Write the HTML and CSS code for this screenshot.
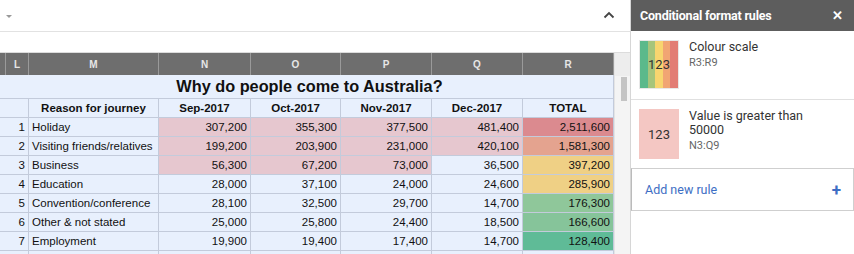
FILE: index.html
```html
<!DOCTYPE html>
<html lang="en">
<head>
  <meta charset="UTF-8" />
  <title>Conditional format rules</title>
  <link rel="stylesheet" href="styles.css">
</head>
<body>
  <div class="app">

    <!-- SHEET -->
    <div class="sheet">
      <div class="toolbar">
        <span class="drop"></span>
        <svg class="caret" width="12" height="8" viewBox="0 0 12 8"><path d="M1.5 6.5 L6 2 L10.5 6.5" fill="none" stroke="#444" stroke-width="1.8"/></svg>
      </div>
      <div class="formula"></div>

      <div class="body">
        <div class="grid-wrap">
          <div class="cols">
            <div class="ch"></div>
            <div class="ch">L</div>
            <div class="ch">M</div>
            <div class="ch">N</div>
            <div class="ch">O</div>
            <div class="ch">P</div>
            <div class="ch">Q</div>
            <div class="ch">R</div>
          </div>

          <div class="grid">
            <div class="c"></div>
            <div class="c title">Why do people come to Australia?</div>

            <div class="c"></div>
            <div class="c"></div>
            <div class="c head">Reason for journey</div>
            <div class="c head">Sep-2017</div>
            <div class="c head">Oct-2017</div>
            <div class="c head">Nov-2017</div>
            <div class="c head">Dec-2017</div>
            <div class="c head">TOTAL</div>

            <div class="c"></div>
            <div class="c num">1</div>
            <div class="c">Holiday</div>
            <div class="c num pink">307,200</div>
            <div class="c num pink">355,300</div>
            <div class="c num pink">377,500</div>
            <div class="c num pink">481,400</div>
            <div class="c num t1">2,511,600</div>

            <div class="c"></div>
            <div class="c num">2</div>
            <div class="c">Visiting friends/relatives</div>
            <div class="c num pink">199,200</div>
            <div class="c num pink">203,900</div>
            <div class="c num pink">231,000</div>
            <div class="c num pink">420,100</div>
            <div class="c num t2">1,581,300</div>

            <div class="c"></div>
            <div class="c num">3</div>
            <div class="c">Business</div>
            <div class="c num pink">56,300</div>
            <div class="c num pink">67,200</div>
            <div class="c num pink">73,000</div>
            <div class="c num">36,500</div>
            <div class="c num t3">397,200</div>

            <div class="c"></div>
            <div class="c num">4</div>
            <div class="c">Education</div>
            <div class="c num">28,000</div>
            <div class="c num">37,100</div>
            <div class="c num">24,000</div>
            <div class="c num">24,600</div>
            <div class="c num t4">285,900</div>

            <div class="c"></div>
            <div class="c num">5</div>
            <div class="c">Convention/conference</div>
            <div class="c num">28,100</div>
            <div class="c num">32,500</div>
            <div class="c num">29,700</div>
            <div class="c num">14,700</div>
            <div class="c num t5">176,300</div>

            <div class="c"></div>
            <div class="c num">6</div>
            <div class="c">Other &amp; not stated</div>
            <div class="c num">25,000</div>
            <div class="c num">25,800</div>
            <div class="c num">24,400</div>
            <div class="c num">18,500</div>
            <div class="c num t6">166,600</div>

            <div class="c"></div>
            <div class="c num">7</div>
            <div class="c">Employment</div>
            <div class="c num">19,900</div>
            <div class="c num">19,400</div>
            <div class="c num">17,400</div>
            <div class="c num">14,700</div>
            <div class="c num t7">128,400</div>

            <div class="c"></div><div class="c"></div><div class="c"></div><div class="c"></div>
            <div class="c"></div><div class="c"></div><div class="c"></div><div class="c"></div>
          </div>
        </div>

        <div class="scroll">
          <div class="scroll-head"></div>
          <div class="thumb"></div>
        </div>
      </div>
    </div>

    <!-- SIDE PANEL -->
    <aside class="panel">
      <div class="panel-head">
        <span>Conditional format rules</span>
        <span class="close">&#x2715;</span>
      </div>

      <div class="rule">
        <div class="swatch scale">
          <i class="s1"></i><i class="s2"></i><i class="s3"></i><i class="s4"></i><i class="s5"></i>
          <span>123</span>
        </div>
        <div class="rule-text">
          <div class="rule-name">Colour scale</div>
          <div class="rule-range">R3:R9</div>
        </div>
      </div>

      <div class="rule rule-two">
        <div class="swatch pinkbox"><span>123</span></div>
        <div class="rule-text">
          <div class="rule-name">Value is greater than<br>50000</div>
          <div class="rule-range">N3:Q9</div>
        </div>
      </div>

      <div class="add">
        <span>Add new rule</span>
        <span class="plus">+</span>
      </div>
    </aside>

  </div>
</body>
</html>
```

FILE: styles.css
```css
* { box-sizing: border-box; margin: 0; padding: 0; }

body {
  background: #fff;
  font-family: "Liberation Sans", Arial, sans-serif;
  color: #222;
  width: 854px;
  height: 254px;
  overflow: hidden;
}

.app {
  display: flex;
  height: 254px;
}

/* Sheet */
.sheet {
  width: 630px;
  display: flex;
  flex-direction: column;
  overflow: hidden;
}

.toolbar {
  height: 32px;
  flex-shrink: 0;
  border-bottom: 1px solid #e2e2e2;
  display: flex;
  align-items: center;
  justify-content: space-between;
  padding: 0 15px 0 6px;
}

.drop {
  width: 0;
  height: 0;
  border-left: 3px solid transparent;
  border-right: 3px solid transparent;
  border-top: 3px solid #999;
  margin-top: 1px;
}

.caret { margin-top: -2px; }

.formula {
  height: 21px;
  flex-shrink: 0;
  border-bottom: 1px solid #dcdcdc;
}

.body {
  display: flex;
  flex-shrink: 0;
}

.grid-wrap {
  width: 614px;
}

.cols,
.grid {
  display: grid;
  grid-template-columns: 5px 22px 129px 91px 89px 90px 90px 90px;
  column-gap: 1px;
  padding-right: 1px;
}

.cols {
  background: #9a9a9a;
  height: 22px;
}

.ch {
  background: #6e6e6e;
  color: #e6e6e6;
  font-size: 10px;
  font-weight: bold;
  display: flex;
  align-items: center;
  justify-content: center;
}

.grid {
  background: #c3cbdb;
  row-gap: 1px;
  grid-template-rows: 23px repeat(9, 18px);
}

.c {
  background: #e8f0fd;
  font-size: 11.5px;
  line-height: 18px;
  padding: 0 3px;
  white-space: nowrap;
  overflow: hidden;
  color: #111;
}

.title {
  grid-column: 2 / 9;
  text-align: center;
  font-weight: bold;
  font-size: 16.3px;
  line-height: 23px;
}

.head {
  text-align: center;
  font-weight: bold;
}

.num { text-align: right; }

.pink { background: #e6c7cf; }
.t1 { background: #db8a8f; }
.t2 { background: #e4a38f; }
.t3 { background: #efd085; }
.t4 { background: #efd085; }
.t5 { background: #8fc79a; }
.t6 { background: #86c49a; }
.t7 { background: #5fbb97; }

.scroll {
  width: 16px;
  background: #f4f4f4;
  border-left: 1px solid #e4e4e4;
  display: flex;
  flex-direction: column;
  align-items: center;
}

.scroll-head {
  height: 23px;
  width: 100%;
  background: #ededed;
}

.thumb {
  width: 6px;
  height: 24px;
  margin-top: 1px;
  margin-left: 2px;
  background: #c4c4c4;
}

/* Side panel */
.panel {
  width: 224px;
  border-left: 1px solid #d6d6d6;
  font-family: Roboto, "Liberation Sans", sans-serif;
  display: flex;
  flex-direction: column;
}

.panel-head {
  height: 31px;
  flex-shrink: 0;
  background: #5d5d5d;
  color: #fff;
  font-size: 12.5px;
  font-weight: bold;
  display: flex;
  align-items: center;
  justify-content: space-between;
  padding: 0 11px 0 9px;
  letter-spacing: -0.2px;
}

.close {
  font-size: 13px;
  font-weight: bold;
}

.rule {
  display: flex;
  gap: 10px;
  padding: 9px 0 0 8px;
  height: 69px;
  flex-shrink: 0;
  border-bottom: 1px solid #e0e0e0;
}

.rule-two {
  height: 68px;
  border-bottom: none;
}

.swatch {
  width: 40px;
  height: 49px;
  position: relative;
  display: flex;
  flex-shrink: 0;
}

.scale {
  border: 1px solid #e8e8e8;
}

.scale i { flex: 1; }
.s1 { background: #5bb98b; }
.s2 { background: #a7c57b; }
.s3 { background: #f8d56f; }
.s4 { background: #f1a573; }
.s5 { background: #e27d75; }

.swatch span {
  position: absolute;
  inset: 0;
  display: flex;
  align-items: center;
  justify-content: center;
  font-size: 13px;
  color: #333;
}

.pinkbox {
  background: #f4c7c3;
  height: 50px;
}

.rule-name {
  font-size: 12.5px;
  line-height: 14px;
  color: #333;
}

.rule-range {
  font-size: 11px;
  color: #666;
  margin-top: 2px;
}

.add {
  height: 43px;
  flex-shrink: 0;
  border: 1px solid #cfcfcf;
  border-left-color: #bbb;
  display: flex;
  align-items: center;
  justify-content: space-between;
  padding: 0 12px 0 13px;
  color: #3d6ec4;
  font-size: 12.5px;
}

.plus {
  font-size: 17px;
  font-weight: bold;
}
```
